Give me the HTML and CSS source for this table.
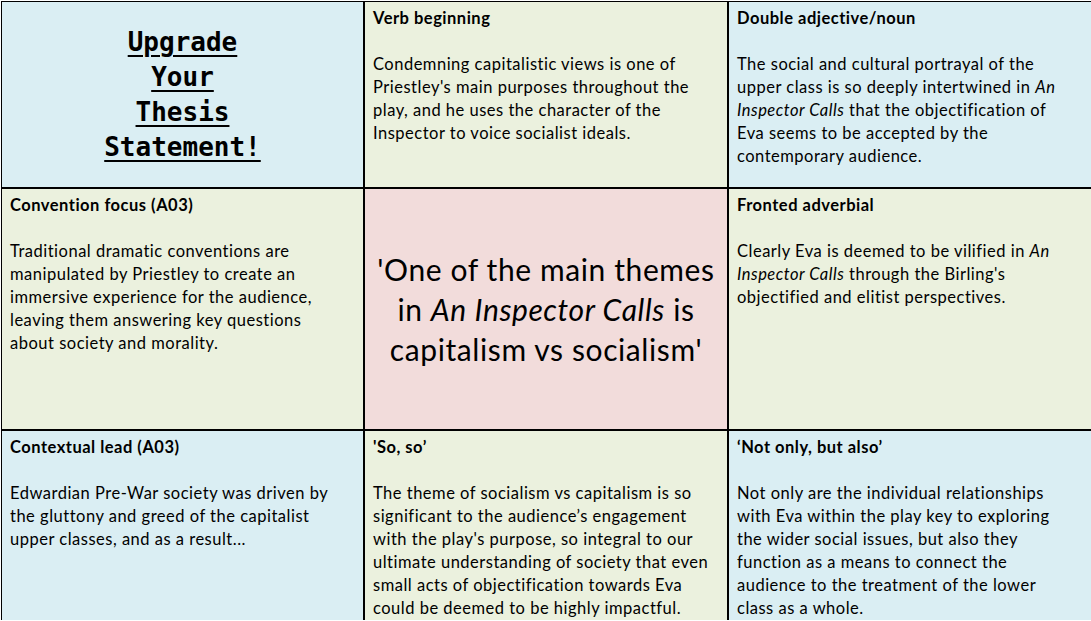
FILE: index.html
```html
<!DOCTYPE html>
<html>
<head>
<meta charset="utf-8">
<link rel="stylesheet" href="styles.css">
</head>
<body>
<div class="grid">
  <div class="cell blue title-cell">
    <div class="title"><span>Upgrade</span><br><span>Your</span><br><span>Thesis</span><br><span>Statement!</span></div>
  </div>
  <div class="cell green">
    <p class="head">Verb beginning</p>
    <p class="body">Condemning capitalistic views is one of<br>Priestley's main purposes throughout the<br>play, and he uses the character of the<br>Inspector to voice socialist ideals.</p>
  </div>
  <div class="cell blue">
    <p class="head">Double adjective/noun</p>
    <p class="body">The social and cultural portrayal of the<br>upper class is so deeply intertwined in <i>An</i><br><i>Inspector Calls</i> that the objectification of<br>Eva seems to be accepted by the<br>contemporary audience.</p>
  </div>
  <div class="cell green">
    <p class="head">Convention focus (A03)</p>
    <p class="body">Traditional dramatic conventions are<br>manipulated by Priestley to create an<br>immersive experience for the audience,<br>leaving them answering key questions<br>about society and morality.</p>
  </div>
  <div class="cell pink center-cell">
    <p class="quote">'One of the main themes<br>in <i>An Inspector Calls</i> is<br>capitalism vs socialism'</p>
  </div>
  <div class="cell green">
    <p class="head">Fronted adverbial</p>
    <p class="body">Clearly Eva is deemed to be vilified in <i>An</i><br><i>Inspector Calls</i> through the Birling's<br>objectified and elitist perspectives.</p>
  </div>
  <div class="cell blue">
    <p class="head">Contextual lead (A03)</p>
    <p class="body">Edwardian Pre-War society was driven by<br>the gluttony and greed of the capitalist<br>upper classes, and as a result...</p>
  </div>
  <div class="cell green">
    <p class="head">'So, so’</p>
    <p class="body">The theme of socialism vs capitalism is so<br>significant to the audience’s engagement<br>with the play's purpose, so integral to our<br>ultimate understanding of society that even<br>small acts of objectification towards Eva<br>could be deemed to be highly impactful.</p>
  </div>
  <div class="cell blue">
    <p class="head">‘Not only, but also’</p>
    <p class="body">Not only are the individual relationships<br>with Eva within the play key to exploring<br>the wider social issues, but also they<br>function as a means to connect the<br>audience to the treatment of the lower<br>class as a whole.</p>
  </div>
</div>
</body>
</html>
```
FILE: styles.css
```css
html, body {
  margin: 0;
  padding: 0;
  background: #ffffff;
  overflow: hidden;
}
.grid {
  margin: 1px 0 0 1px;
  padding: 1px 0 0 1px;
  background: #000000;
  display: grid;
  grid-template-columns: 361px 362px 1fr;
  grid-template-rows: 185px 240px 1fr;
  gap: 2px;
  height: 619px;
  box-sizing: border-box;
  font-family: Lato, "Noto Sans", sans-serif;
  color: #000000;
}
.cell {
  padding: 5px 8px 0 8px;
  overflow: hidden;
}
.blue { background: #daeef3; }
.green { background: #ebf1de; }
.pink { background: #f2dcdb; }
.head {
  margin: 0;
  font-weight: bold;
  font-size: 16.5px;
  letter-spacing: 0.5px;
  line-height: 23px;
  white-space: nowrap;
}
.body {
  margin: 23px 0 0 0;
  font-size: 16.5px;
  letter-spacing: 0.5px;
  line-height: 23px;
  white-space: nowrap;
}
.title-cell {
  display: flex;
  align-items: center;
  justify-content: center;
  padding: 0;
}
.title {
  font-family: "DejaVu Sans Mono", "Liberation Mono", monospace;
  font-weight: bold;
  font-size: 26px;
  line-height: 35px;
  text-align: center;
}
.title span {
  text-decoration: underline;
  text-decoration-thickness: 2px;
  text-underline-offset: 4px;
}
.center-cell {
  display: flex;
  align-items: center;
  justify-content: center;
  padding: 0;
}
.quote {
  margin: 0;
  font-size: 30px;
  letter-spacing: 0.6px;
  line-height: 40px;
  text-align: center;
  white-space: nowrap;
}
```
